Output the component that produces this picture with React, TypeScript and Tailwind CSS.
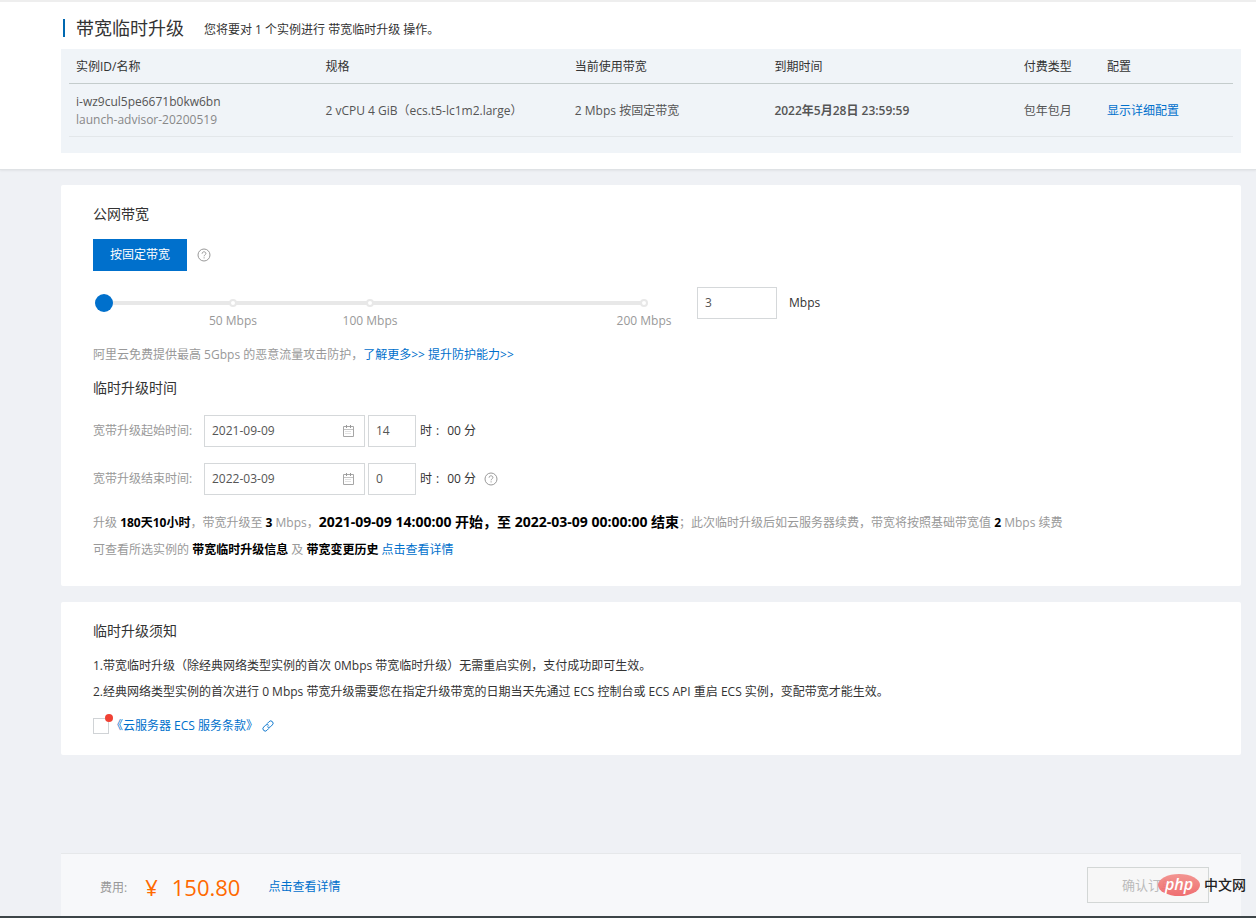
import { useState } from "react";
import type { ReactNode } from "react";

const LINK = "text-[#0070cc]";
const FIELD = "h-8 border border-[#d5d8da] bg-white px-[7px] text-xs text-[#555] outline-none";

function Link({ children }: { children: ReactNode }) {
  return (
    <a href="#" className={LINK}>
      {children}
    </a>
  );
}

function Strong({ children }: { children: ReactNode }) {
  return <strong className="font-bold text-black">{children}</strong>;
}

function HelpIcon() {
  return (
    <svg viewBox="0 0 14 14" className="size-3.5 shrink-0" fill="none" stroke="#999" aria-hidden="true">
      <circle cx="7" cy="7" r="6" />
      <path d="M5.100 5.700c0-1.200.8-1.900 1.900-1.900s1.900.7 1.900 1.700c0 1.300-1.800 1.400-1.800 2.800M7.100 9.300v1.100" />
    </svg>
  );
}

function CalendarIcon() {
  return (
    <svg viewBox="0 0 12 12" className="size-3 shrink-0" fill="none" aria-hidden="true">
      <path d="M.5 1.500h10v10H.5z" stroke="#a6a6a6" />
      <path d="M1 4.500h9" stroke="#c4c4c4" />
      <path d="M3.500 0v3M7.500 0v3" stroke="#999" />
      <path d="M2.500 6.500h6M2.500 8.500h6" stroke="#c4c4c4" strokeDasharray="1 1" />
    </svg>
  );
}

function ChainIcon() {
  return (
    <svg viewBox="0 0 12 12" className="size-3 shrink-0" fill="none" stroke="#0070cc" aria-hidden="true">
      <g transform="rotate(-45 6 6)">
        <path d="M5 8.300H2.100a2.300 2.300 0 0 1 0-4.600h2.700a2.300 2.300 0 0 1 2.200 2.300" strokeWidth=".9" />
        <path d="M7 3.700h2.900a2.300 2.300 0 0 1 0 4.600H7.200A2.300 2.300 0 0 1 5 6" strokeWidth=".9" />
      </g>
    </svg>
  );
}

const MARKS = [50, 100, 200];

function BandwidthSlider({ value, onChange }: { value: number; onChange: (v: number) => void }) {
  return (
    <div className="relative ml-[3px] h-8 w-[548px]">
      <div className="mt-3.5 h-1 bg-[#e8e8e8]" />
      {MARKS.map((m) => (
        <div
          key={m}
          className="absolute top-3 flex w-20 -translate-x-1/2 flex-col items-center"
          style={{ left: `${m / 2}%` }}
        >
          <span className="size-2 rounded-full border-2 border-[#e8e8e8] bg-white" />
          <span className="mt-1 leading-5 text-[#999]">{m} Mbps</span>
        </div>
      ))}
      <input
        type="range"
        min={0}
        max={200}
        value={value}
        aria-label="公网带宽"
        onChange={(e) => onChange(Number(e.target.value))}
        className="absolute top-1.5 -left-[9px] h-5 w-[566px] appearance-none bg-transparent [&::-webkit-slider-thumb]:size-[18px] [&::-webkit-slider-thumb]:appearance-none [&::-webkit-slider-thumb]:rounded-full [&::-webkit-slider-thumb]:bg-[#0070cc]"
      />
    </div>
  );
}

function TimeRow({ id, label, date, hour, help }: { id: string; label: string; date: string; hour: string; help?: boolean }) {
  return (
    <div className="flex h-8 items-center">
      <label htmlFor={id} className="w-[111px] text-[#999]">
        {label}
      </label>
      <div className={`${FIELD} flex w-[161px] items-center justify-between pr-[9px]`}>
        <input id={id} type="text" defaultValue={date} className="w-28 outline-none" />
        <CalendarIcon />
      </div>
      <input type="text" aria-label={`${label}时`} defaultValue={hour} className={`${FIELD} ml-[3px] w-12`} />
      <span className="ml-1 flex gap-1">
        <span>时</span>
        <span>:</span>
        <span className="ml-1">00 分</span>
      </span>
      {help && (
        <span className="ml-2">
          <HelpIcon />
        </span>
      )}
    </div>
  );
}

function InstanceTable() {
  return (
    <div className="bg-[#f0f4f8] px-2 pb-4">
      <table className="w-full table-fixed text-left">
        <thead>
          <tr className="h-[34px] border-b border-[#c4cccc]">
            <th className="w-15/70 px-[7px] pt-0.5 font-normal">实例ID/名称</th>
            <th className="w-15/70 px-[7px] pt-0.5 font-normal">规格</th>
            <th className="w-12/70 px-[7px] pt-0.5 font-normal">当前使用带宽</th>
            <th className="w-15/70 px-[7px] pt-0.5 font-normal">到期时间</th>
            <th className="w-5/70 px-[7px] pt-0.5 font-normal">付费类型</th>
            <th className="w-8/70 px-[7px] pt-0.5 font-normal">配置</th>
          </tr>
        </thead>
        <tbody>
          <tr className="h-[53px] border-b border-[#e3e7ea] text-[#555]">
            <td className="px-[7px] pt-0.5 leading-[18px]">
              <div className="font-medium">i-wz9cul5pe6671b0kw6bn</div>
              <div className="text-[#888]">launch-advisor-20200519</div>
            </td>
            <td className="px-[7px] pt-0.5">2 vCPU 4 GiB（ecs.t5-lc1m2.large）</td>
            <td className="px-[7px] pt-0.5">2 Mbps 按固定带宽</td>
            <td className="px-[7px] pt-0.5 font-semibold">2022年5月28日 23:59:59</td>
            <td className="px-[7px] pt-0.5">包年包月</td>
            <td className="px-[7px] pt-0.5">
              <Link>显示详细配置</Link>
            </td>
          </tr>
        </tbody>
      </table>
    </div>
  );
}

function Watermark() {
  return (
    <div className="absolute right-2.5 bottom-5 flex items-center gap-1">
      <span className="flex h-[22px] w-[42px] items-center justify-center rounded-[50%] bg-linear-to-b from-[#f28a86]/90 to-[#ee5f62]/90 pb-0.5 text-base font-semibold text-white italic">
        php
      </span>
      <span className="text-sm font-medium text-[#222]">中文网</span>
    </div>
  );
}

export default function App() {
  const [bandwidth, setBandwidth] = useState(3);

  return (
    <div className="flex min-h-screen flex-col bg-[#eff1f5] font-['Open_Sans','Noto_Sans_CJK_SC',sans-serif] text-xs leading-5 text-[#333]">
      <header className="border-t-2 border-b border-t-[#eeeeee] border-b-[#dfe2e5] bg-white pr-[15px] pb-4 pl-[61px] shadow-[0_1px_2px_rgba(0,0,0,0.06)]">
        <div className="flex h-[47px] items-center pt-1 pl-0.5">
          <span className="h-[18px] w-0.5 bg-[#0068b0]" />
          <h1 className="ml-[11px] text-lg">带宽临时升级</h1>
          <p className="ml-5 pt-1">您将要对 1 个实例进行 带宽临时升级 操作。</p>
        </div>
        <InstanceTable />
      </header>

      <main className="flex flex-col gap-4 pt-[15px] pr-[15px] pb-6 pl-[61px]">
        <section className="rounded-xs bg-white px-8 pt-[19px] pb-[26px]">
          <h2 className="text-sm">公网带宽</h2>
          <div className="mt-[15px] flex items-center gap-2.5">
            <button type="button" className="h-8 bg-[#0070cc] px-[17px] text-white">
              按固定带宽
            </button>
            <HelpIcon />
          </div>
          <div className="mt-4 flex items-center">
            <BandwidthSlider value={bandwidth} onChange={setBandwidth} />
            <input
              id="bandwidth"
              type="text"
              value={bandwidth}
              onChange={(e) => setBandwidth(Number(e.target.value) || 0)}
              className={`${FIELD} ml-[53px] w-20`}
            />
            <label htmlFor="bandwidth" className="ml-3">
              Mbps
            </label>
          </div>
          <p className="mt-[26px] text-[#999]">
            阿里云免费提供最高 5Gbps 的恶意流量攻击防护，<Link>了解更多&gt;&gt;</Link> <Link>提升防护能力&gt;&gt;</Link>
          </p>

          <h2 className="mt-[13px] text-sm">临时升级时间</h2>
          <div className="mt-[17px] flex flex-col gap-4">
            <TimeRow id="start" label="宽带升级起始时间:" date="2021-09-09" hour="14" />
            <TimeRow id="end" label="宽带升级结束时间:" date="2022-03-09" hour="0" help />
          </div>
          <p className="mt-[17px] text-[#999]">
            升级 <Strong>180天10小时</Strong>，带宽升级至 <Strong>{bandwidth}</Strong> Mbps，
            <strong className="text-sm font-bold text-black">
              2021-09-09 14:00:00 开始，至 2022-03-09 00:00:00 结束
            </strong>
            ；此次临时升级后如云服务器续费，带宽将按照基础带宽值 <Strong>2</Strong> Mbps 续费
          </p>
          <p className="mt-[7px] text-[#999]">
            可查看所选实例的 <Strong>带宽临时升级信息</Strong> 及 <Strong>带宽变更历史</Strong> <Link>点击查看详情</Link>
          </p>
        </section>

        <section className="rounded-xs bg-white px-8 py-[19px]">
          <h2 className="text-sm">临时升级须知</h2>
          <ol className="mt-3 leading-[26px]">
            <li>1.带宽临时升级（除经典网络类型实例的首次 0Mbps 带宽临时升级）无需重启实例，支付成功即可生效。</li>
            <li>
              2.经典网络类型实例的首次进行 0 Mbps 带宽升级需要您在指定升级带宽的日期当天先通过 ECS 控制台或 ECS API 重启 ECS
              实例，变配带宽才能生效。
            </li>
          </ol>
          <div className="mt-[11px] flex items-center gap-0.5">
            <span className="relative flex">
              <input
                id="terms"
                type="checkbox"
                aria-label="同意《云服务器 ECS 服务条款》"
                className="size-4 appearance-none border border-[#d0d3d6] bg-white checked:bg-[#0070cc]"
              />
              <span className="absolute -top-1 -right-1 size-2 rounded-full bg-[#f04134]" />
            </span>
            <a href="#" className={`${LINK} flex items-center gap-1`}>
              《云服务器 ECS 服务条款》
              <ChainIcon />
            </a>
          </div>
        </section>
      </main>

      <footer className="relative mt-auto border-b-2 border-[#3d4548] pr-[15px] pl-[61px]">
        <div className="flex h-[63px] items-center border-t border-[#e6e8ea] bg-[#f7f8fa] pr-8 pl-[39px]">
          <span className="pt-1.5 text-[#999]">费用:</span>
          <span className="ml-[18px] flex gap-3.5 pt-1 text-[22px] leading-8 text-[#ff6a00]">
            <span className="font-medium">¥</span>
            <span>150.80</span>
          </span>
          <span className="ml-7 pt-1">
            <Link>点击查看详情</Link>
          </span>
          <button
            type="button"
            disabled
            className="ml-auto h-9 w-[122px] border border-[#d3d7d6] bg-[#f7f7f7] text-[13px] text-[#bbb]"
          >
            确认订单
          </button>
        </div>
        <Watermark />
      </footer>
    </div>
  );
}
